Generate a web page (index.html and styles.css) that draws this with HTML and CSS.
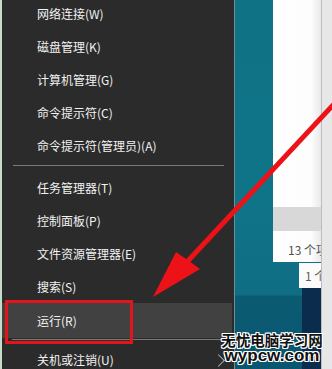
FILE: index.html
```html
<!DOCTYPE html>
<html lang="zh-CN">
<head>
  <meta charset="UTF-8">
  <meta name="viewport" content="width=device-width, initial-scale=1.0">
  <title>Win+X 菜单</title>
  <link rel="stylesheet" href="styles.css">
</head>
<body>

  <div class="screen">
    <div class="edge"></div>

    <ul class="menu">
      <li class="item first">网络连接(W)</li>
      <li class="item">磁盘管理(K)</li>
      <li class="item">计算机管理(G)</li>
      <li class="item">命令提示符(C)</li>
      <li class="item">命令提示符(管理员)(A)</li>
      <li class="sep"></li>
      <li class="item">任务管理器(T)</li>
      <li class="item">控制面板(P)</li>
      <li class="item">文件资源管理器(E)</li>
      <li class="item">搜索(S)</li>
      <li class="item hover">运行(R)</li>
      <li class="sep sep-low"></li>
      <li class="item">关机或注销(U)<span class="chevron"></span></li>
    </ul>

    <div class="desk">
      <div class="desk-left"></div>
      <div class="window-col">
        <div class="window">
          <div class="band"></div>
          <div class="status">13 个项目</div>
        </div>
        <div class="window2">1 个项目</div>
        <div class="navy"></div>
      </div>
      <div class="strip"></div>
    </div>
  </div>

  <div class="mark-box"></div>

  <svg class="arrow" width="332" height="369" viewBox="0 0 332 369">
    <line x1="334" y1="104" x2="186" y2="263" stroke="#ec1217" stroke-width="5"/>
    <polygon points="153,297 176,252 189,261 200,269" fill="#ec1217"/>
  </svg>

  <div class="watermark">
    <div class="wm-cn">无忧电脑学习网</div>
    <div class="wm-en">wypcw.com</div>
  </div>

</body>
</html>
```

FILE: styles.css
```css
body {
  margin: 0;
  padding: 0;
  width: 332px;
  height: 369px;
  overflow: hidden;
  position: relative;
  font-family: "Noto Sans CJK SC", "Noto Sans", sans-serif;
  background: #2b2b2b;
}

.screen {
  display: flex;
  height: 369px;
}

.edge {
  width: 2px;
  background: #c6dcc8;
}

.menu {
  list-style: none;
  margin: 0;
  padding: 0;
  width: 233px;
  background: #2b2b2b;
}

.item {
  display: flex;
  align-items: center;
  height: 33px;
  padding-left: 35px;
  font-size: 12px;
  color: #f2f2f2;
  position: relative;
}

.item.first {
  margin-top: -3px;
}

.item.hover {
  height: 35px;
  background: #414141;
  margin-right: 2px;
}

.sep {
  height: 1px;
  margin: 3px 10px 5px 11px;
  background: #7a7a7a;
}

.sep.sep-low {
  margin: 1px 10px 3px 10px;
}

.chevron {
  position: absolute;
  left: 212px;
  top: 13px;
  width: 8px;
  height: 8px;
  border-top: 1px solid #b0b0b0;
  border-right: 1px solid #b0b0b0;
  transform: rotate(45deg);
}

.desk {
  flex: 1;
  display: flex;
  border-left: 1px solid #6d8f95;
  background: linear-gradient(#0f7285 0, #107488 200px, #0f6e84 295px, #0b5b73 296px, #0a5670 369px);
}

.desk-left {
  width: 38px;
}

.window-col {
  width: 48px;
  display: flex;
  flex-direction: column;
}

.window {
  height: 262px;
  background: linear-gradient(90deg, #ffffff 0, #fdfdfd 38px, #e9e9e9 48px);
  overflow: hidden;
  white-space: nowrap;
}

.band {
  height: 24px;
  margin-top: 207px;
  background: #d8d8d8;
}

.status {
  padding: 10px 0 0 15px;
  font-size: 12px;
  color: #505050;
}

.window2 {
  height: 25px;
  margin-left: 26px;
  margin-top: 1px;
  background: #fbfbfb;
  overflow: hidden;
  white-space: nowrap;
  font-size: 12px;
  line-height: 25px;
  padding-left: 6px;
  color: #606060;
}

.navy {
  flex: 1;
  margin-left: 29px;
  background: #0b2c4c;
}

.strip {
  width: 10px;
  border-left: 1px solid #bdbdbd;
  background: #e7e7e7;
}

.mark-box {
  position: absolute;
  left: 5px;
  top: 300px;
  width: 122px;
  height: 38px;
  border: 3px solid #e3141b;
}

.arrow {
  position: absolute;
  left: 0;
  top: 0;
}

.watermark {
  position: absolute;
  left: 219px;
  top: 332px;
  width: 106px;
  text-align: center;
  color: #111;
  font-weight: bold;
  text-shadow: 1px 1px 0 #fff, -1px -1px 0 #fff, 1px -1px 0 #fff, -1px 1px 0 #fff, 0 1px 0 #fff, 0 -1px 0 #fff, 1px 0 0 #fff, -1px 0 0 #fff;
}

.wm-cn {
  font-size: 14.5px;
  line-height: 16px;
  letter-spacing: 0;
  font-family: "Noto Sans CJK SC", sans-serif;
}

.wm-en {
  font-size: 17px;
  line-height: 16px;
  font-family: "Liberation Sans", Arial, sans-serif;
}
```
